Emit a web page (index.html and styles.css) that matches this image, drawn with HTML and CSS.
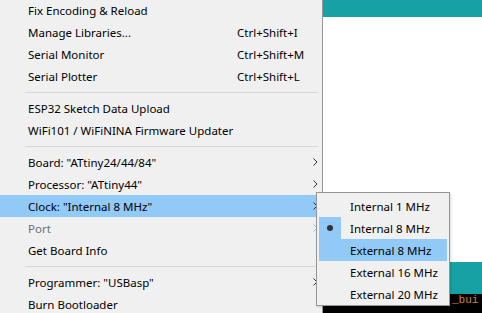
FILE: index.html
```html
<!DOCTYPE html>
<html lang="en">
<head>
    <meta charset="UTF-8">
    <title>Tools menu</title>
    <link rel="stylesheet" href="styles.css">
</head>
<body>
    <div class="screen">
        <div class="menu">
            <div class="item"><span class="label">Fix Encoding &amp; Reload</span></div>
            <div class="item"><span class="label">Manage Libraries...</span><span class="shortcut">Ctrl+Shift+I</span></div>
            <div class="item"><span class="label">Serial Monitor</span><span class="shortcut">Ctrl+Shift+M</span></div>
            <div class="item"><span class="label">Serial Plotter</span><span class="shortcut">Ctrl+Shift+L</span></div>
            <div class="sep"></div>
            <div class="item"><span class="label">ESP32 Sketch Data Upload</span></div>
            <div class="item"><span class="label">WiFi101 / WiFiNINA Firmware Updater</span></div>
            <div class="sep"></div>
            <div class="item"><span class="label">Board: "ATtiny24/44/84"</span><svg class="arrow" width="5" height="8" viewBox="0 0 5 8"><path d="M0.5 0.5 L4 4 L0.5 7.5"/></svg></div>
            <div class="item"><span class="label">Processor: "ATtiny44"</span><svg class="arrow" width="5" height="8" viewBox="0 0 5 8"><path d="M0.5 0.5 L4 4 L0.5 7.5"/></svg></div>
            <div class="item active"><span class="label">Clock: "Internal 8 MHz"</span><svg class="arrow" width="5" height="8" viewBox="0 0 5 8"><path d="M0.5 0.5 L4 4 L0.5 7.5"/></svg></div>
            <div class="item disabled"><span class="label">Port</span><svg class="arrow" width="5" height="8" viewBox="0 0 5 8"><path d="M0.5 0.5 L4 4 L0.5 7.5"/></svg></div>
            <div class="item"><span class="label">Get Board Info</span></div>
            <div class="sep"></div>
            <div class="item"><span class="label">Programmer: "USBasp"</span><svg class="arrow" width="5" height="8" viewBox="0 0 5 8"><path d="M0.5 0.5 L4 4 L0.5 7.5"/></svg></div>
            <div class="item"><span class="label">Burn Bootloader</span></div>
        </div>

        <div class="editor">
            <div class="tabs"></div>
            <div class="code"></div>
            <div class="console-bar"></div>
            <div class="console"><span class="out">_bui</span></div>
        </div>

        <div class="submenu">
            <div class="sub-item"><span class="check"></span><span>Internal 1 MHz</span></div>
            <div class="sub-item checked"><span class="check"><span class="dot"></span></span><span>Internal 8 MHz</span></div>
            <div class="sub-item hover"><span class="check"></span><span>External 8 MHz</span></div>
            <div class="sub-item"><span class="check"></span><span>External 16 MHz</span></div>
            <div class="sub-item"><span class="check"></span><span>External 20 MHz</span></div>
        </div>
    </div>
</body>
</html>
```

FILE: styles.css
```css
:root {
    --menu-bg: #f0f0f0;
    --hover: #91c9f7;
    --teal: #17a1a5;
    --border: #979797;
}

* {
    margin: 0;
    padding: 0;
    box-sizing: border-box;
}

body {
    font-family: 'Noto Sans', sans-serif;
    font-size: 11.5px;
    color: #000;
    background: #fff;
    width: 482px;
    height: 313px;
    overflow: hidden;
}

.screen {
    position: relative;
    display: flex;
    width: 482px;
    height: 313px;
    overflow: hidden;
}

.menu {
    width: 323px;
    flex-shrink: 0;
    background: var(--menu-bg);
    border-right: 1px solid var(--border);
    margin-top: -1px;
}

.item {
    display: flex;
    align-items: center;
    height: 22px;
    padding-left: 28px;
    position: relative;
}

.item.active {
    background: var(--hover);
}

.item.disabled {
    color: #6d6d6d;
}

.label {
    white-space: nowrap;
}

.shortcut {
    position: absolute;
    left: 237px;
}

.arrow {
    position: absolute;
    left: 313px;
    top: 7px;
    fill: none;
    stroke: #333;
    stroke-width: 1;
}

.disabled .arrow {
    stroke: #b5b5b5;
}

.sep {
    height: 10px;
    display: flex;
    align-items: center;
    padding: 0 4px 0 25px;
}

.sep::before {
    content: "";
    flex: 1;
    height: 1px;
    background: #d7d7d7;
}

.editor {
    flex: 1;
    display: flex;
    flex-direction: column;
}

.tabs {
    height: 17px;
    background: var(--teal);
}

.code {
    flex: 1;
    background: #fff;
}

.console-bar {
    height: 32px;
    background: var(--teal);
}

.console {
    height: 19px;
    background: #000;
    position: relative;
}

.console .out {
    position: absolute;
    left: 129px;
    top: 0;
    font-family: 'Liberation Mono', monospace;
    font-size: 11px;
    line-height: 13px;
    color: #d3803c;
}

.submenu {
    position: absolute;
    left: 316px;
    top: 192px;
    width: 134px;
    height: 114px;
    background: var(--menu-bg);
    border: 1px solid var(--border);
    padding: 2px;
    box-shadow: 1px 1px 2px rgb(0 0 0 / 0.15);
}

.sub-item {
    display: flex;
    align-items: center;
    height: 22px;
    white-space: nowrap;
}

.sub-item.hover {
    background: var(--hover);
}

.check {
    width: 22px;
    height: 22px;
    margin-right: 9px;
    display: flex;
    align-items: center;
    justify-content: center;
}

.checked .check {
    background: var(--hover);
}

.dot {
    width: 6px;
    height: 6px;
    border-radius: 50%;
    background: #333;
}
```
